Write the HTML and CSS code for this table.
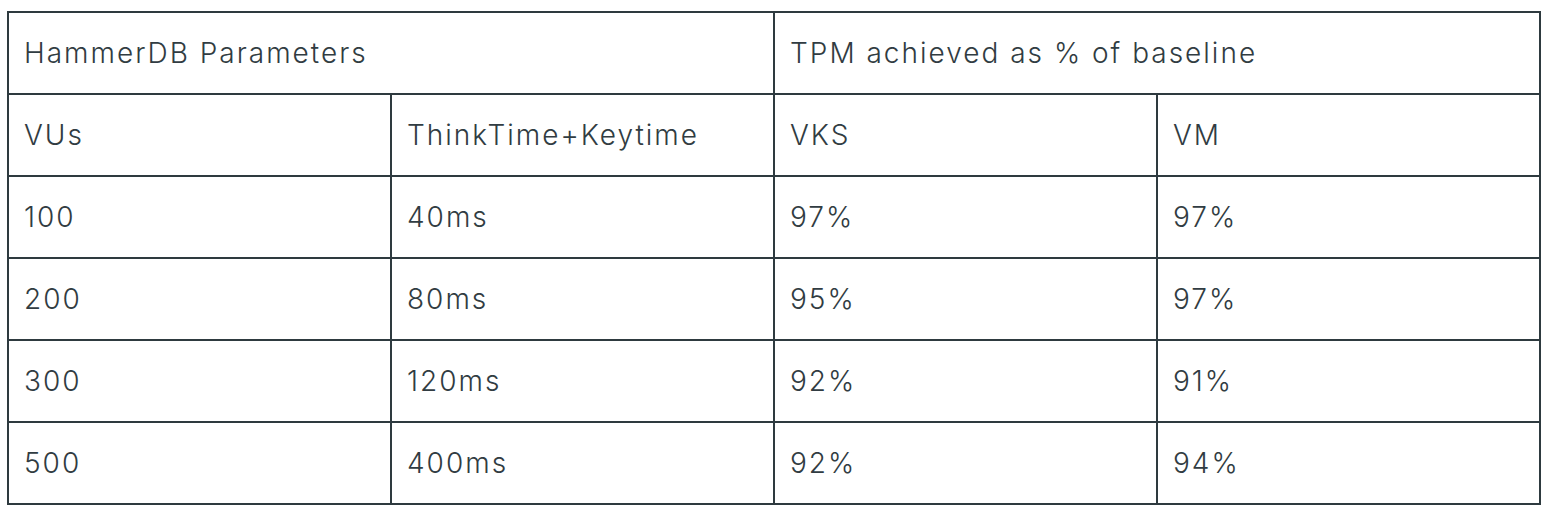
FILE: index.html
```html
<!DOCTYPE html>
<html>
<head>
<meta charset="utf-8">
<link rel="stylesheet" href="styles.css">
</head>
<body>
<table class="results">
  <colgroup>
    <col class="col"><col class="col"><col class="col"><col class="col">
  </colgroup>
  <tr>
    <td colspan="2">HammerDB Parameters</td>
    <td colspan="2">TPM achieved as % of baseline</td>
  </tr>
  <tr>
    <td>VUs</td>
    <td>ThinkTime+Keytime</td>
    <td>VKS</td>
    <td>VM</td>
  </tr>
  <tr><td>100</td><td>40ms</td><td>97%</td><td>97%</td></tr>
  <tr><td>200</td><td>80ms</td><td>95%</td><td>97%</td></tr>
  <tr><td>300</td><td>120ms</td><td>92%</td><td>91%</td></tr>
  <tr><td>500</td><td>400ms</td><td>92%</td><td>94%</td></tr>
</table>
</body>
</html>
```

FILE: styles.css
```css
html, body {
  margin: 0;
  background: #ffffff;
}
body {
  padding: 11px 0 0 7px;
  font-family: "Inter", "Liberation Sans", sans-serif;
  color: #313c42;
}
.results {
  border-collapse: collapse;
  table-layout: fixed;
  width: 1534px;
}
.results td {
  border: 2px solid #2e3a3f;
  height: 82px;
  padding: 0 15px;
  box-sizing: border-box;
  font-size: 28px;
  font-weight: 350;
  letter-spacing: 2px;
  line-height: 32px;
  vertical-align: middle;
  white-space: nowrap;
}
```
